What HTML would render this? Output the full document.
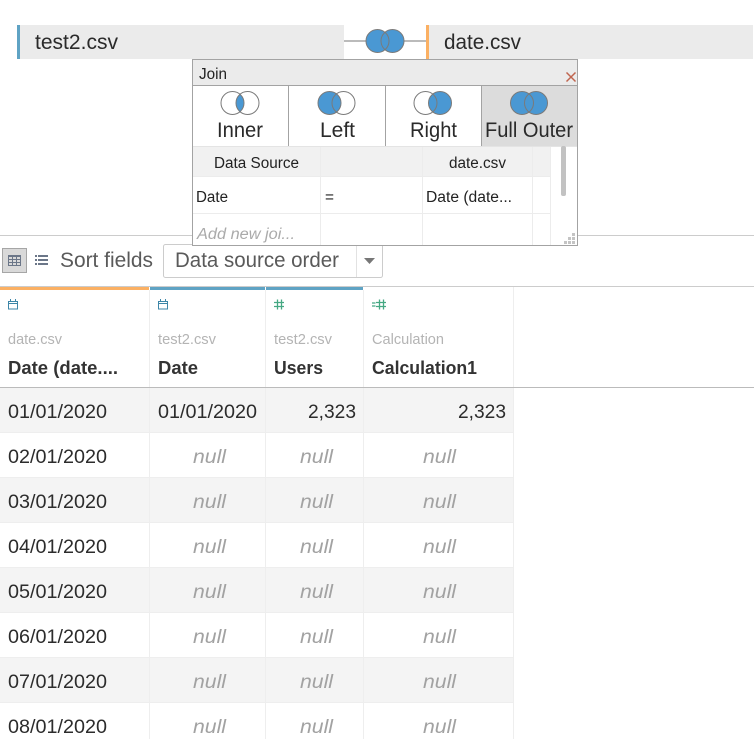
<!DOCTYPE html>
<html lang="en">
<head>
<meta charset="utf-8">
<title>Join</title>
<style>
html,body{margin:0;padding:0;background:#fff;width:754px;height:739px;overflow:hidden}
svg{display:block}
text{font-family:"Liberation Sans",sans-serif;white-space:pre}
.big{font-size:21px;fill:#2a2a2a}
.btn{font-size:21px;fill:#2a2a2a}
.t{font-size:15.5px;fill:#222}
.src{font-size:14.5px;fill:#b4b4b4}
.h{font-size:18px;font-weight:bold;fill:#333}
.v{font-size:19px;fill:#2c2c2c}
.n{font-size:19px;font-style:italic;fill:#a2a2a2}
.s{font-size:21px;fill:#5a5a5a}
</style>
</head>
<body>
<svg width="754" height="739" viewBox="0 0 754 739" xmlns="http://www.w3.org/2000/svg">
<!-- top bars -->
<rect x="17" y="25" width="327" height="34" fill="#ebebeb"/>
<rect x="17" y="25" width="3" height="34" fill="#5fa3c4"/>
<rect x="426" y="25" width="327" height="34" fill="#ebebeb"/>
<rect x="426" y="25" width="3" height="34" fill="#fbb063"/>
<rect x="344" y="40" width="82" height="2" fill="#bbb"/>
<text class="big" x="35" y="49" textLength="83" lengthAdjust="spacingAndGlyphs">test2.csv</text>
<text class="big" x="444" y="49" textLength="77" lengthAdjust="spacingAndGlyphs">date.csv</text>
<circle cx="377.5" cy="41" r="11.5" fill="#4a98d3"/>
<circle cx="392.5" cy="41" r="11.5" fill="#4a98d3"/>
<circle cx="377.5" cy="41" r="11.5" fill="none" stroke="#7a7a7a"/>
<circle cx="392.5" cy="41" r="11.5" fill="none" stroke="#7a7a7a"/>

<!-- toolbar lines and table header -->
<rect x="0" y="235" width="754" height="1" fill="#ccc"/>
<rect x="0" y="286" width="754" height="1" fill="#ccc"/>
<rect x="2.500" y="248.500" width="24" height="24" fill="#d9d9d9" stroke="#a6a6a6"/>
<g fill="#6b7688">
<path fill-rule="evenodd" d="M8 255h13v11H8zM9 257v2h3v-2zM13 257v2h3v-2zM17 257v2h3v-2zM9 260v2h3v-2zM13 260v2h3v-2zM17 260v2h3v-2zM9 263v2h3v-2zM13 263v2h3v-2zM17 263v2h3v-2z"/>
<rect x="35" y="255" width="2" height="2"/><rect x="38" y="255" width="10" height="2"/>
<rect x="35" y="259" width="2" height="2"/><rect x="38" y="259" width="10" height="2"/>
<rect x="35" y="263" width="2" height="2"/><rect x="38" y="263" width="10" height="2"/>
</g>
<text class="s" x="60" y="267" textLength="93" lengthAdjust="spacingAndGlyphs">Sort fields</text>
<rect x="163.500" y="244.500" width="219" height="33" rx="2" fill="#fff" stroke="#ccc"/>
<rect x="356" y="245" width="1" height="32" fill="#e2e2e2"/>
<text class="s" x="175" y="267" textLength="164" lengthAdjust="spacingAndGlyphs">Data source order</text>
<path d="M364 258h11l-5.500 6z" fill="#777"/>

<!-- colored header strips -->
<rect x="0" y="287" width="149" height="3" fill="#fbb063"/>
<rect x="150" y="287" width="115" height="3" fill="#5fa3c4"/>
<rect x="266" y="287" width="97" height="3" fill="#5fa3c4"/>

<!-- row backgrounds -->
<rect x="0" y="388" width="513" height="45" fill="#f4f4f4"/>
<rect x="0" y="478" width="513" height="45" fill="#f4f4f4"/>
<rect x="0" y="568" width="513" height="45" fill="#f4f4f4"/>
<rect x="0" y="658" width="513" height="45" fill="#f4f4f4"/>
<!-- row separators -->
<g fill="#eeeeee">
<rect x="0" y="432" width="513" height="1"/>
<rect x="0" y="477" width="513" height="1"/>
<rect x="0" y="522" width="513" height="1"/>
<rect x="0" y="567" width="513" height="1"/>
<rect x="0" y="612" width="513" height="1"/>
<rect x="0" y="657" width="513" height="1"/>
<rect x="0" y="702" width="513" height="1"/>
<rect x="149" y="290" width="1" height="449"/>
<rect x="265" y="290" width="1" height="449"/>
<rect x="363" y="290" width="1" height="449"/>
<rect x="513" y="287" width="1" height="452"/>
</g>
<rect x="0" y="387" width="754" height="1" fill="#bbb"/>

<!-- field type icons -->
<g fill="none" stroke="#3d86a8" stroke-width="1">
<path d="M8.500 301.500h9v7.500h-9zM8.500 303.500h9M10.500 299v2.500M15.500 299v2.500"/>
<path d="M158.500 301.500h9v7.500h-9zM158.500 303.500h9M160.500 299v2.500M165.500 299v2.500"/>
</g>
<g fill="none" stroke="#45a883" stroke-width="1.300">
<path d="M277.500 299.500v10M281.500 299.500v10M274 302.500h10M274 306.500h10"/>
<path d="M379.500 299.500v10M383.500 299.500v10M376 302.500h10M376 306.500h10M372 303h3.500M372 306h3.500"/>
</g>

<!-- header text -->
<text class="src" x="8" y="344" textLength="54" lengthAdjust="spacingAndGlyphs">date.csv</text>
<text class="src" x="158" y="344" textLength="58" lengthAdjust="spacingAndGlyphs">test2.csv</text>
<text class="src" x="274" y="344" textLength="58" lengthAdjust="spacingAndGlyphs">test2.csv</text>
<text class="src" x="372" y="344" textLength="72" lengthAdjust="spacingAndGlyphs">Calculation</text>
<text class="h" x="8" y="374" textLength="110" lengthAdjust="spacingAndGlyphs">Date (date....</text>
<text class="h" x="158" y="374" textLength="40" lengthAdjust="spacingAndGlyphs">Date</text>
<text class="h" x="274" y="374" textLength="49" lengthAdjust="spacingAndGlyphs">Users</text>
<text class="h" x="372" y="374" textLength="105" lengthAdjust="spacingAndGlyphs">Calculation1</text>

<!-- data rows -->
<text class="v" x="8" y="418" textLength="99" lengthAdjust="spacingAndGlyphs">01/01/2020</text>
<text class="v" x="158" y="418" textLength="99" lengthAdjust="spacingAndGlyphs">01/01/2020</text>
<text class="v" x="308" y="418" textLength="48" lengthAdjust="spacingAndGlyphs">2,323</text>
<text class="v" x="458" y="418" textLength="48" lengthAdjust="spacingAndGlyphs">2,323</text>

<text class="v" x="8" y="463" textLength="99" lengthAdjust="spacingAndGlyphs">02/01/2020</text>
<text class="n" x="193" y="463" textLength="33" lengthAdjust="spacingAndGlyphs">null</text>
<text class="n" x="300" y="463" textLength="33" lengthAdjust="spacingAndGlyphs">null</text>
<text class="n" x="423" y="463" textLength="33" lengthAdjust="spacingAndGlyphs">null</text>

<text class="v" x="8" y="508" textLength="99" lengthAdjust="spacingAndGlyphs">03/01/2020</text>
<text class="n" x="193" y="508" textLength="33" lengthAdjust="spacingAndGlyphs">null</text>
<text class="n" x="300" y="508" textLength="33" lengthAdjust="spacingAndGlyphs">null</text>
<text class="n" x="423" y="508" textLength="33" lengthAdjust="spacingAndGlyphs">null</text>

<text class="v" x="8" y="553" textLength="99" lengthAdjust="spacingAndGlyphs">04/01/2020</text>
<text class="n" x="193" y="553" textLength="33" lengthAdjust="spacingAndGlyphs">null</text>
<text class="n" x="300" y="553" textLength="33" lengthAdjust="spacingAndGlyphs">null</text>
<text class="n" x="423" y="553" textLength="33" lengthAdjust="spacingAndGlyphs">null</text>

<text class="v" x="8" y="598" textLength="99" lengthAdjust="spacingAndGlyphs">05/01/2020</text>
<text class="n" x="193" y="598" textLength="33" lengthAdjust="spacingAndGlyphs">null</text>
<text class="n" x="300" y="598" textLength="33" lengthAdjust="spacingAndGlyphs">null</text>
<text class="n" x="423" y="598" textLength="33" lengthAdjust="spacingAndGlyphs">null</text>

<text class="v" x="8" y="643" textLength="99" lengthAdjust="spacingAndGlyphs">06/01/2020</text>
<text class="n" x="193" y="643" textLength="33" lengthAdjust="spacingAndGlyphs">null</text>
<text class="n" x="300" y="643" textLength="33" lengthAdjust="spacingAndGlyphs">null</text>
<text class="n" x="423" y="643" textLength="33" lengthAdjust="spacingAndGlyphs">null</text>

<text class="v" x="8" y="688" textLength="99" lengthAdjust="spacingAndGlyphs">07/01/2020</text>
<text class="n" x="193" y="688" textLength="33" lengthAdjust="spacingAndGlyphs">null</text>
<text class="n" x="300" y="688" textLength="33" lengthAdjust="spacingAndGlyphs">null</text>
<text class="n" x="423" y="688" textLength="33" lengthAdjust="spacingAndGlyphs">null</text>

<text class="v" x="8" y="733" textLength="99" lengthAdjust="spacingAndGlyphs">08/01/2020</text>
<text class="n" x="193" y="733" textLength="33" lengthAdjust="spacingAndGlyphs">null</text>
<text class="n" x="300" y="733" textLength="33" lengthAdjust="spacingAndGlyphs">null</text>
<text class="n" x="423" y="733" textLength="33" lengthAdjust="spacingAndGlyphs">null</text>

<!-- join dialog -->
<rect x="192.500" y="59.500" width="385" height="186" fill="#fff" stroke="#a3a3a3"/>
<rect x="193" y="60" width="384" height="25" fill="#ebebeb"/>
<rect x="193" y="85" width="384" height="1" fill="#a3a3a3"/>
<text x="199" y="79" class="t" textLength="28" lengthAdjust="spacingAndGlyphs">Join</text>
<path d="M566.500 72.500l9 9M575.500 72.500l-9 9" stroke="#c0654f" stroke-width="1.500" fill="none"/>
<rect x="482" y="86" width="95" height="60" fill="#dcdcdc"/>
<rect x="288" y="86" width="1" height="60" fill="#a3a3a3"/>
<rect x="385" y="86" width="1" height="60" fill="#a3a3a3"/>
<rect x="481" y="86" width="1" height="60" fill="#a3a3a3"/>

<!-- inner -->
<path d="M240 94.280a11.500 11.500 0 0 1 0 17.440a11.500 11.500 0 0 1 0-17.440z" fill="#4a98d3"/>
<circle cx="232.500" cy="103" r="11.500" fill="none" stroke="#7a7a7a"/>
<circle cx="247.500" cy="103" r="11.500" fill="none" stroke="#7a7a7a"/>
<!-- left -->
<circle cx="329.500" cy="103" r="11.500" fill="#4a98d3"/>
<circle cx="329.500" cy="103" r="11.500" fill="none" stroke="#7a7a7a"/>
<circle cx="343.500" cy="103" r="11.500" fill="none" stroke="#7a7a7a"/>
<!-- right -->
<circle cx="440" cy="103" r="11.500" fill="#4a98d3"/>
<circle cx="425.500" cy="103" r="11.500" fill="none" stroke="#7a7a7a"/>
<circle cx="440" cy="103" r="11.500" fill="none" stroke="#7a7a7a"/>
<!-- full -->
<circle cx="522" cy="103" r="11.500" fill="#4a98d3"/>
<circle cx="536" cy="103" r="11.500" fill="#4a98d3"/>
<circle cx="522" cy="103" r="11.500" fill="none" stroke="#7a7a7a"/>
<circle cx="536" cy="103" r="11.500" fill="none" stroke="#7a7a7a"/>

<text class="btn" x="217" y="137" textLength="46" lengthAdjust="spacingAndGlyphs">Inner</text>
<text class="btn" x="320" y="137" textLength="35" lengthAdjust="spacingAndGlyphs">Left</text>
<text class="btn" x="410" y="137" textLength="47" lengthAdjust="spacingAndGlyphs">Right</text>
<text class="btn" x="485" y="137" textLength="88" lengthAdjust="spacingAndGlyphs">Full Outer</text>

<!-- join grid -->
<rect x="193" y="146" width="358" height="31" fill="#f1f1f1"/>
<rect x="193" y="146" width="384" height="1" fill="#e4e4e4"/>
<g fill="#ececec">
<rect x="193" y="176" width="358" height="1"/>
<rect x="193" y="213" width="358" height="1"/>
<rect x="320" y="147" width="1" height="98"/>
<rect x="422" y="147" width="1" height="98"/>
<rect x="532" y="147" width="1" height="98"/>
<rect x="550" y="147" width="1" height="98"/>
</g>
<rect x="561" y="146" width="5" height="50" rx="2" fill="#c2c2c2"/>
<text class="t" x="214" y="168" textLength="85" lengthAdjust="spacingAndGlyphs">Data Source</text>
<text class="t" x="449" y="168" textLength="57" lengthAdjust="spacingAndGlyphs">date.csv</text>
<text class="t" x="196" y="202" textLength="32" lengthAdjust="spacingAndGlyphs">Date</text>
<text class="t" x="325" y="202" textLength="9" lengthAdjust="spacingAndGlyphs">=</text>
<text class="t" x="426" y="202" textLength="86" lengthAdjust="spacingAndGlyphs">Date (date...</text>
<text class="t" x="197" y="239" textLength="98" lengthAdjust="spacingAndGlyphs" style="font-style:italic;fill:#aaa">Add new joi...</text>
<g fill="#c4c4c4">
<rect x="572" y="233" width="3" height="3"/>
<rect x="568" y="237" width="3" height="3"/><rect x="572" y="237" width="3" height="3"/>
<rect x="564" y="241" width="3" height="3"/><rect x="568" y="241" width="3" height="3"/><rect x="572" y="241" width="3" height="3"/>
</g>
</svg>
</body>
</html>
